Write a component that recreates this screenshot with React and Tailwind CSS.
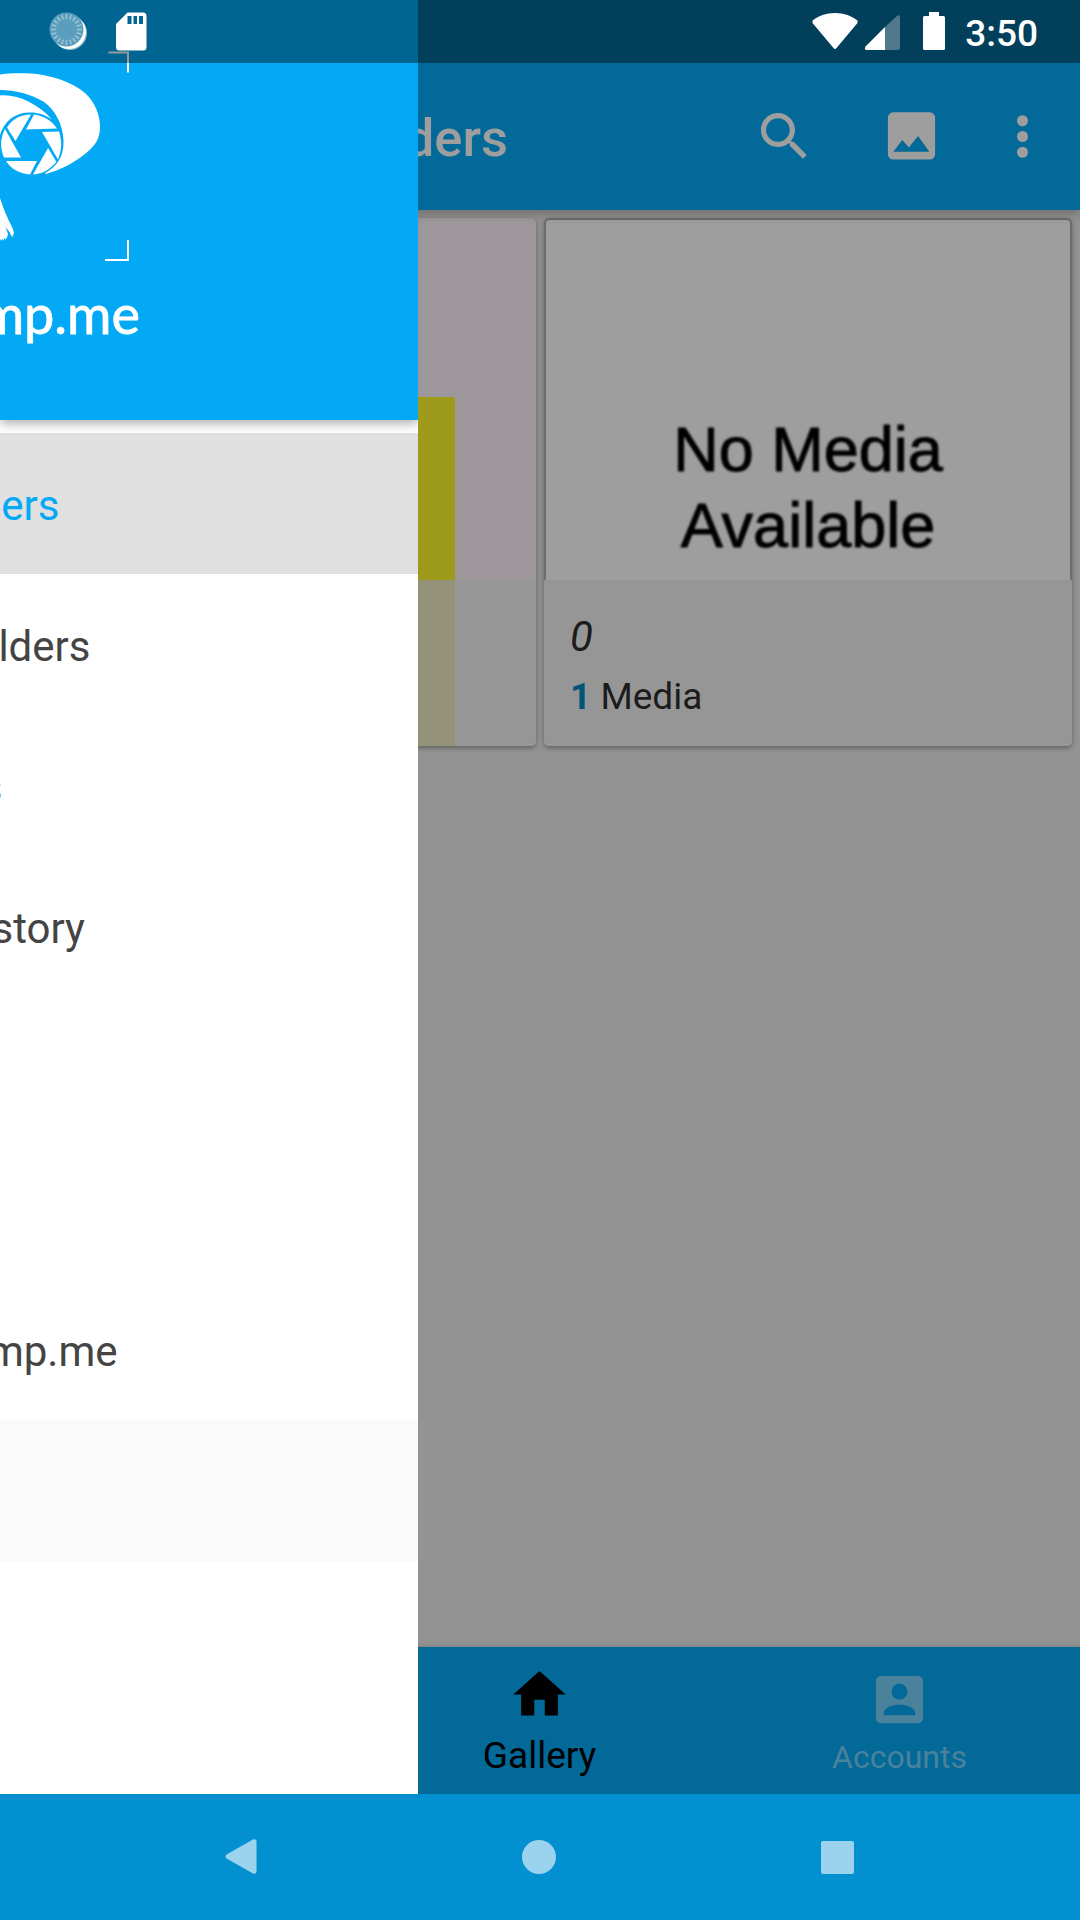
const wedges = Array.from({ length: 20 }, (_, i) => i * 18);

function StatusBar() {
  return (
    <div className="absolute inset-x-0 top-0 z-20 flex h-[63px] items-start bg-black/40">
      <svg className="ml-[49px] mt-[11px] h-[40px] w-[39px]" viewBox="49 11 39 40">
        <circle cx="70" cy="33" r="17" fill="#8dbdd3" />
        <circle cx="69" cy="32" r="17" fill="#fff" />
        <circle cx="66.500" cy="29.500" r="17" fill="#5b9dbc" />
        <g stroke="#9cc5d8" strokeWidth="1.500">
          {wedges.map((a) => (
            <path key={a} d="M66.500 14V19" transform={`rotate(${a} 66.500 29.500)`} />
          ))}
        </g>
      </svg>
      <svg className="ml-[28px] mt-[12px] h-[39px] w-[31px]" viewBox="116 12 31 39">
        <path
          fillRule="evenodd"
          fill="#fff"
          d="M127.500 12.500H143a3.500 3.500 0 0 1 3.500 3.500V47a3.500 3.500 0 0 1-3.500 3.500H119.500A3.500 3.500 0 0 1 116 47V24Zm0 3.500v8h4v-8Zm6 0v8h3.500v-8Zm5.500 0v8h4v-8Z"
        />
      </svg>
      <div className="ml-auto flex items-start">
        <svg className="mt-[12px] h-[40px] w-[134px]" viewBox="812 12 134 40">
          <path fill="#fff" d="M835 13C826 13 818 16 812.500 20.500V23L833.500 48Q835 50 836.500 48L857.500 23V20.500C852 16 844 13 835 13Z" />
          <path fill="#51788c" d="M885 27L897 16Q900 14 900 17V48Q900 50 898 50H885Z" />
          <path fill="#fff" d="M885 27V50H866Q864 49 865.500 46.500Z" />
          <path fill="#fff" d="M929 12H939V16H943.500Q945 16 945 17.500V48.500Q945 50 943.500 50H924.500Q923 50 923 48.500V17.500Q923 16 924.500 16H929Z" />
        </svg>
        <div className="ml-[19px] mr-[42px] mt-[12px] text-[37px] font-medium leading-[43px] text-white">3:50</div>
      </div>
    </div>
  );
}

function Logo() {
  return (
    <svg className="h-[270px] w-[150px]" viewBox="0 0 150 270">
      <path
        fill="#fff"
        d="M0 74.500C8 73 20 73 31 73.500C52 75 72 82 85 93C95 102 100 115 100 127C100 139 95 146 85 154C74 163 60 170 46 174L45 173C57 167 64 156 63.500 141C63 124 55 110 44 102C31 94 15 90 0 90Z"
      />
      <path fill="#fff" d="M0 95.500C18 94 38 104 52 119.500C45 114.500 37 112 28 112.500C14 113 4 122 0 135Z" />
      <circle cx="31" cy="144.500" r="31" fill="#03a9f4" />
      <g fill="#fff">
        <path d="M31 114.500L15.500 141L7 127.500C12 119 20 115 31 114.500Z" />
        <path d="M34 114.500C43 115.500 51 120 57 128.500L26 129.500Z" />
        <path d="M42 132L59 131.500C62 141 62 149 58 159.500Z" />
        <path d="M48 148L56.500 162C50 169 43 174 33 174.500Z" />
        <path d="M6 161H37L30 174.500C20 174 11 169 6 161Z" />
        <path d="M5 129L21 157.500H4C0 148 0 138 5 129Z" />
        <path d="M0 198C3 208 7 217 12 227Q14.500 232 13.500 235L12.500 234L13 237.500Q10.500 236 9.500 232L5.500 227L8 234Q7.500 238 5.500 239.500L4 238V240L2 239V241L0 239Z" />
      </g>
      <path d="M108.500 52.500H128V72.500" fill="none" stroke="#fff" strokeWidth="2" />
      <path d="M105 260H128V240" fill="none" stroke="#fff" strokeWidth="2" />
    </svg>
  );
}

function DrawerItem({ label, width = "w-[90.500px]", tone = "text-[#444]" }) {
  return (
    <div className={`flex h-[141px] items-center overflow-hidden pt-[3px] text-[42px] leading-[49px] ${tone}`}>
      <div className={`flex justify-end whitespace-nowrap ${width}`}>{label}</div>
    </div>
  );
}

function Drawer() {
  return (
    <aside className="absolute left-0 top-0 z-10 h-[1794px] w-[418px] overflow-hidden bg-white">
      <div className="relative h-[420px] bg-[#03a9f4] shadow-[0_4px_10px_rgba(0,0,0,0.3)]">
        <Logo />
        <div className="mt-[14px] flex w-[140px] justify-end whitespace-nowrap font-['Lato',sans-serif] text-[54px] leading-[60px] text-white [-webkit-text-stroke:0.8px_#fff]">
          mp.me
        </div>
      </div>
      <nav className="pt-[13px]">
        <DrawerItem label="ers" width="w-[59.500px]" tone="bg-[#e0e0e0] text-[#03a9f4]" />
        <DrawerItem label="lders" />
        <DrawerItem label="s" width="w-[2.500px]" />
        <DrawerItem label="story" width="w-[85px]" />
        <DrawerItem />
        <DrawerItem />
        <DrawerItem label="mp.me" width="w-[117.500px]" />
        <DrawerItem tone="bg-[#fafafa]" />
      </nav>
    </aside>
  );
}

function Toolbar() {
  return (
    <header className="relative flex h-[210px] items-center bg-[#026998] pt-[63px] text-[#9e9e9e] shadow-[0_4px_10px_rgba(0,0,0,0.25)]">
      <h1 className="flex w-[508px] justify-end pt-[3px] text-[52.500px] font-medium leading-[62px]">ders</h1>
      <svg className="ml-[245px] size-[63px]" viewBox="0 0 24 24" fill="currentColor">
        <path d="M15.500 14h-.79l-.28-.27C15.410 12.590 16 11.110 16 9.500 16 5.910 13.090 3 9.500 3S3 5.910 3 9.500 5.910 16 9.500 16c1.610 0 3.090-.59 4.230-1.570l.27.28v.79l5 4.990L20.490 19l-4.990-5zm-6 0C7.010 14 5 11.990 5 9.500S7.010 5 9.500 5 14 7.010 14 9.500 11.990 14 9.500 14z" />
      </svg>
      <svg className="ml-[64px] size-[63px]" viewBox="0 0 24 24" fill="currentColor">
        <path
          fillRule="evenodd"
          d="M5 2.800H19a2 2 0 0 1 2 2V18.800a2 2 0 0 1-2 2H5a2 2 0 0 1-2-2V4.800a2 2 0 0 1 2-2ZM5.100 17.800H18.800L14.500 11.800L11 16.200L8.500 13.300Z"
        />
      </svg>
      <svg className="ml-[48px] size-[63px]" viewBox="0 0 24 24" fill="currentColor">
        <circle cx="12" cy="6" r="2.100" />
        <circle cx="12" cy="12" r="2.100" />
        <circle cx="12" cy="18" r="2.100" />
      </svg>
    </header>
  );
}

function Albums() {
  return (
    <main className="grid h-[1437px] grid-cols-2 content-start gap-2 bg-[#939393] p-2">
      <section className="flex h-[528px] flex-col overflow-hidden rounded-[5px] bg-[#9e989c] shadow-[0_2px_5px_rgba(0,0,0,0.35)]">
        <div className="flex h-[362px] items-end">
          <div className="h-[183px] w-[447px] bg-[#9e9a1b]" />
        </div>
        <div className="flex h-[166px] bg-[#969696]">
          <div className="w-[447px] bg-[#949379]" />
        </div>
      </section>
      <section className="flex h-[528px] flex-col overflow-hidden rounded-[5px] bg-[#969696] shadow-[0_2px_5px_rgba(0,0,0,0.35)]">
        <div className="h-[362px] rounded-t-[5px] border-2 border-b-0 border-[#6c6c6c] bg-[#9e9e9e]">
          <p className="pt-[191px] text-center font-['Liberation_Sans',sans-serif] text-[63px] leading-[76px] text-black blur-[0.8px] [-webkit-text-stroke:1px_#000]">
            No Media
            <br />
            Available
          </p>
        </div>
        <div className="h-[166px] bg-[#969696] pl-[26px] pt-[32px] text-[#1c1c1c]">
          <div className="text-[42px] italic leading-[49px]">0</div>
          <div className="mt-[14px] text-[37px] leading-[43px]">
            <b className="font-bold text-[#025579]">1</b> Media
          </div>
        </div>
      </section>
    </main>
  );
}

function BottomTabs() {
  return (
    <footer className="relative flex h-[147px] justify-end bg-[#026998] shadow-[0_-1px_4px_rgba(0,0,0,0.12)]">
      <div className="flex w-[359px] flex-col items-center pt-4 text-black">
        <svg className="size-[63px]" viewBox="0 0 24 24" fill="currentColor">
          <path d="M10 20v-6h4v6h5v-8h3L12 3 2 12h3v8z" />
        </svg>
        <div className="mt-[8px] text-[37px] leading-[43px]">Gallery</div>
      </div>
      <div className="flex w-[361px] flex-col items-center pt-[21px] text-[#4a829c]">
        <svg className="size-[63px]" viewBox="0 0 24 24" fill="currentColor">
          <path d="M3 5v14c0 1.100.89 2 2 2h14c1.100 0 2-.9 2-2V5c0-1.100-.9-2-2-2H5c-1.110 0-2 .9-2 2zm12 4c0 1.660-1.340 3-3 3s-3-1.340-3-3 1.340-3 3-3 3 1.340 3 3zm-9 8c0-2 4-3.100 6-3.100s6 1.100 6 3.100v1H6v-1z" />
        </svg>
        <div className="mt-[8px] text-[32px] leading-[37px]">Accounts</div>
      </div>
    </footer>
  );
}

function SystemNav() {
  return (
    <div className="flex h-[126px] items-center bg-[#0390d0] text-[#9bd3ee]">
      <svg className="ml-[224px] h-[38px] w-[34px]" viewBox="0 0 34 38" fill="currentColor">
        <path d="M2.500 16.500L29 1.500Q32 .5 32.500 3V34Q32 36.500 29 35.500L2.500 20.500Q.5 18.500 2.500 16.500Z" />
      </svg>
      <div className="ml-[264px] size-[34px] rounded-full bg-current" />
      <div className="ml-[265px] size-[33px] rounded-[2px] bg-current" />
    </div>
  );
}

export default function App() {
  return (
    <div className="relative h-[1920px] w-[1080px] overflow-hidden bg-white font-['Roboto',sans-serif]">
      <Toolbar />
      <Albums />
      <BottomTabs />
      <SystemNav />
      <Drawer />
      <StatusBar />
    </div>
  );
}
